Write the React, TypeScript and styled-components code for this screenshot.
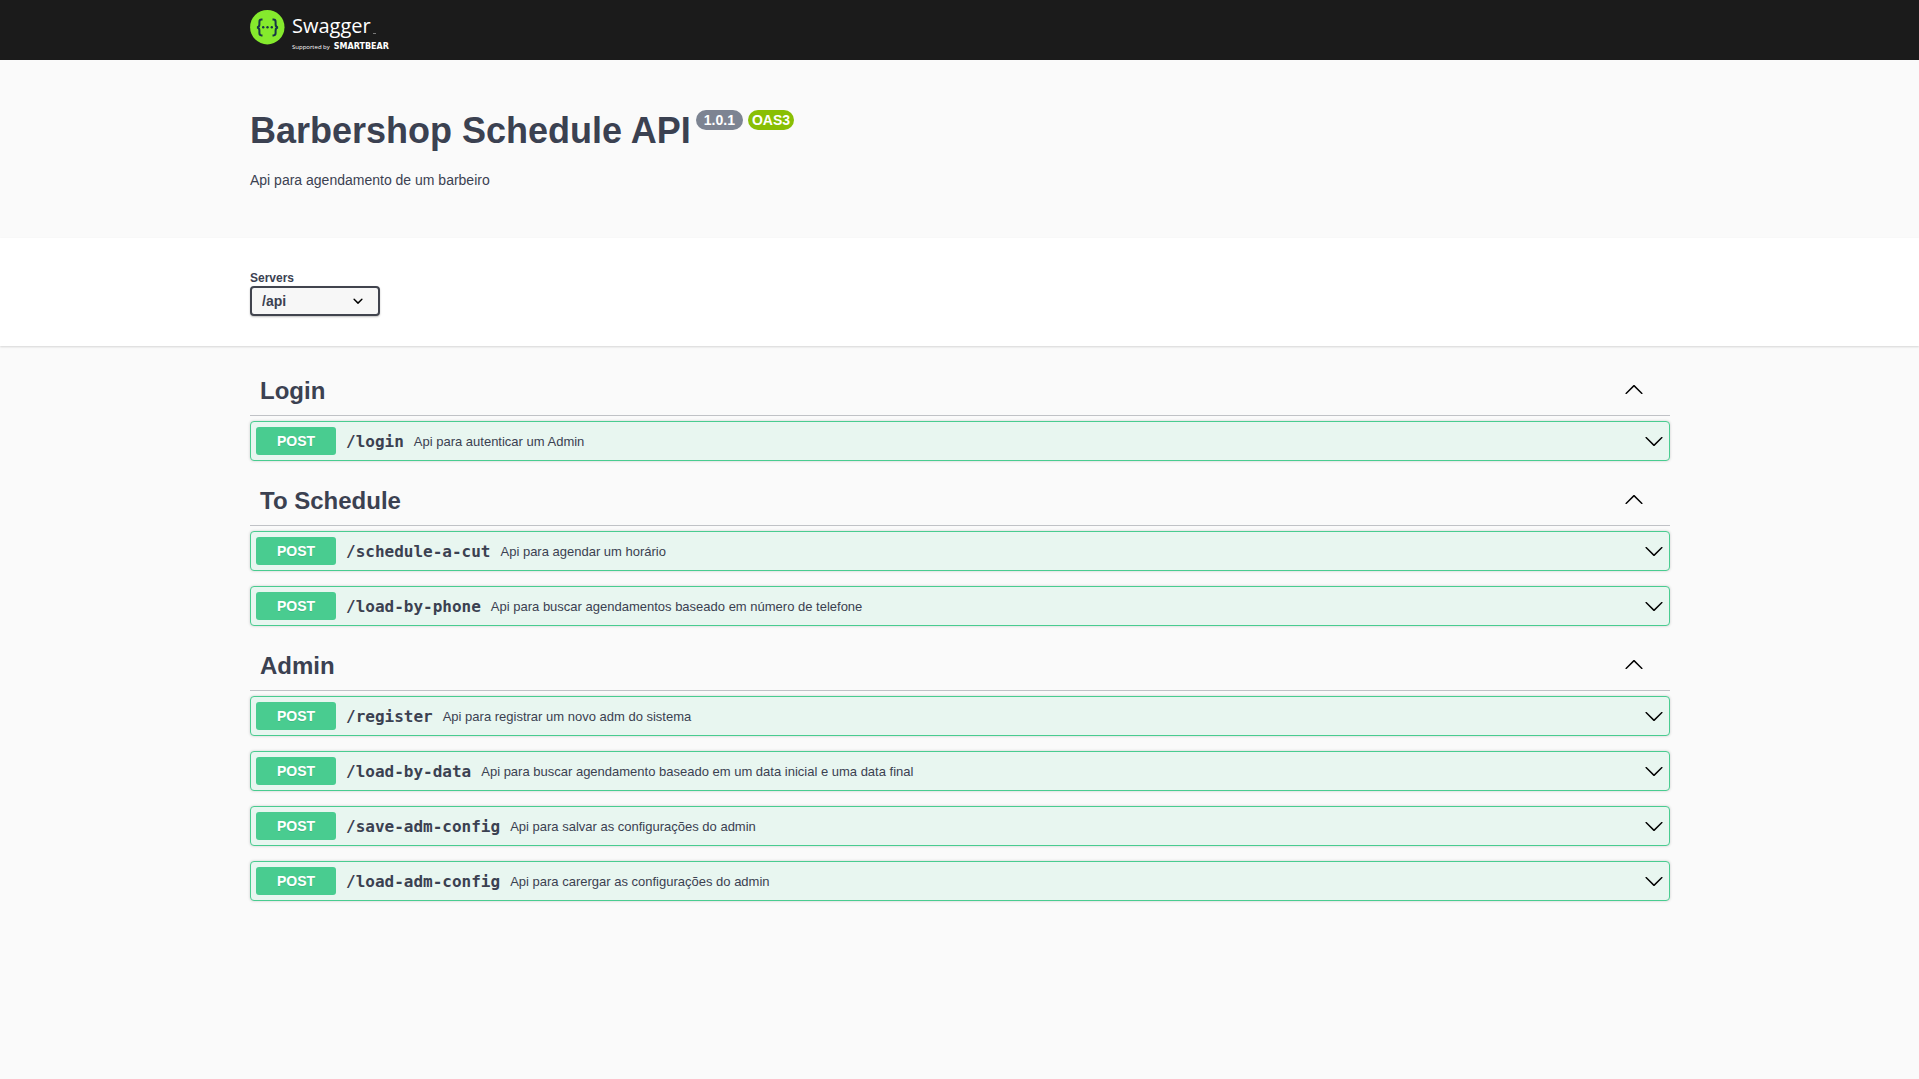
import React, { useState } from "react";
import styled, { createGlobalStyle } from "styled-components";

const GlobalStyle = createGlobalStyle`
  *, *::before, *::after { box-sizing: border-box; }
  body {
    margin: 0;
    background: #fafafa;
    color: #3b4151;
    font-family: "Liberation Sans", Arial, sans-serif;
  }
`;

const Wrapper = styled.div`
  width: 100%;
  max-width: 1459px;
  margin: 0 auto;
  padding: 0 19px 0 20px;
`;

const Topbar = styled.header`
  background: #1b1b1b;
  padding: 10px 0;
`;

const LogoLink = styled.a`
  display: flex;
  gap: 7px;
  height: 40px;
  width: max-content;
  color: #fff;
  text-decoration: none;
`;

const LogoMark = styled.svg`
  width: 35px;
  height: 35px;
`;

const LogoWords = styled.span`
  display: flex;
  flex-direction: column;
  font-family: "Open Sans", sans-serif;
`;

const LogoName = styled.span`
  display: flex;
  align-items: flex-end;
  gap: 2px;
  font-size: 20px;
  line-height: 32px;
`;

const Trademark = styled.span`
  width: 3px;
  height: 1px;
  margin-bottom: 8px;
  background: #777;
`;

const LogoSupport = styled.span`
  display: flex;
  align-items: baseline;
  gap: 4px;
  font-size: 6px;
  line-height: 10px;
`;

const LogoCompany = styled.b`
  font-family: "DejaVu Sans", sans-serif;
  font-size: 8px;
`;

const Info = styled.section`
  padding: 50px 0;
`;

const Title = styled.h1`
  display: flex;
  align-items: flex-start;
  gap: 5px;
  margin: 0;
  font-size: 36px;
  line-height: 41px;
`;

const Badge = styled.span<{ $color: string; $pad: number }>`
  padding: 2px ${(p) => p.$pad}px;
  border-radius: 57px;
  background: ${(p) => p.$color};
  color: #fff;
  font-size: 14px;
  line-height: 16px;
`;

const Description = styled.p`
  margin: 21px 0 0;
  font-size: 14px;
  line-height: 16px;
`;

const Schemes = styled.section`
  margin-bottom: 20px;
  padding: 30px 0;
  background: #fff;
  box-shadow: 0 1px 2px rgba(0, 0, 0, 0.15);
`;

const ServerLabel = styled.label`
  display: flex;
  flex-direction: column;
  align-items: flex-start;
  padding-top: 2px;
  font-size: 12px;
  font-weight: 700;
  line-height: 16px;
`;

const SelectBox = styled.span`
  display: grid;
  width: 130px;
  align-items: center;

  & > * {
    grid-area: 1 / 1;
  }
`;

const Select = styled.select`
  appearance: none;
  width: 100%;
  height: 30px;
  padding: 0 40px 0 10px;
  border: 2px solid #41444e;
  border-radius: 4px;
  background: #f7f7f7;
  box-shadow: 0 1px 2px rgba(0, 0, 0, 0.25);
  color: #3b4151;
  font-family: inherit;
  font-size: 14px;
  font-weight: 700;
`;

const SelectArrow = styled.svg`
  width: 20px;
  height: 20px;
  margin-right: 12px;
  justify-self: end;
  pointer-events: none;
`;

const TagSection = styled.section`
  display: flex;
  flex-direction: column;
`;

const TagHeader = styled.h2`
  margin: 0 0 5px;
  border-bottom: 1px solid rgba(59, 65, 81, 0.3);
  font-size: 24px;
  line-height: 29px;
`;

const TagButton = styled.button`
  display: flex;
  align-items: center;
  justify-content: space-between;
  width: 100%;
  padding: 10px 26px 10px 10px;
  border: 0;
  background: none;
  color: inherit;
  font: inherit;
  text-align: left;
  cursor: pointer;

  & > svg {
    margin-bottom: 1px;
  }
`;

const Operation = styled.button`
  display: flex;
  align-items: center;
  gap: 10px;
  height: 40px;
  margin-bottom: 15px;
  padding: 5px;
  border: 1px solid #49cc90;
  border-radius: 4px;
  background: #e8f6f0;
  box-shadow: 0 0 3px rgba(0, 0, 0, 0.19);
  color: #3b4151;
  font-family: inherit;
  text-align: left;
  cursor: pointer;
`;

const Method = styled.span`
  width: 80px;
  padding: 6px 0;
  border-radius: 3px;
  background: #49cc90;
  color: #fff;
  font-size: 14px;
  font-weight: 700;
  line-height: 16px;
  text-align: center;
  text-shadow: 0 1px 0 rgba(0, 0, 0, 0.1);
`;

const Path = styled.span`
  font-family: "DejaVu Sans Mono", monospace;
  font-size: 16px;
  font-weight: 700;
  line-height: 19px;
`;

const Summary = styled.span`
  flex: 1;
  font-size: 13px;
  line-height: 15px;
`;

const ChevronSvg = styled.svg<{ $up: boolean }>`
  width: 20px;
  height: 20px;
  transform: ${(p) => (p.$up ? "rotate(180deg)" : "none")};
`;

const Chevron = ({ up = false }: { up?: boolean }) => (
  <ChevronSvg $up={up} viewBox="0 0 20 20" aria-hidden="true">
    <path
      d="M17.418 6.109c.272-.268.709-.268.979 0s.271.701 0 .969l-7.908 7.83c-.27.268-.707.268-.979 0l-7.908-7.83c-.27-.268-.27-.701 0-.969.271-.268.709-.268.979 0L10 13.25z"
      fill="#000"
    />
  </ChevronSvg>
);

const sections = [
  { name: "Login", operations: [{ path: "/login", summary: "Api para autenticar um Admin" }] },
  {
    name: "To Schedule",
    operations: [
      { path: "/schedule-a-cut", summary: "Api para agendar um horário" },
      { path: "/load-by-phone", summary: "Api para buscar agendamentos baseado em número de telefone" },
    ],
  },
  {
    name: "Admin",
    operations: [
      { path: "/register", summary: "Api para registrar um novo adm do sistema" },
      { path: "/load-by-data", summary: "Api para buscar agendamento baseado em um data inicial e uma data final" },
      { path: "/save-adm-config", summary: "Api para salvar as configurações do admin" },
      { path: "/load-adm-config", summary: "Api para carergar as configurações do admin" },
    ],
  },
];

const Tag = ({ name, operations }: (typeof sections)[number]) => {
  const [open, setOpen] = useState(true);
  return (
    <TagSection>
      <TagHeader>
        <TagButton type="button" aria-expanded={open} onClick={() => setOpen(!open)}>
          {name}
          <Chevron up={open} />
        </TagButton>
      </TagHeader>
      {open &&
        operations.map((op) => (
          <Operation type="button" key={op.path}>
            <Method>POST</Method>
            <Path>{op.path}</Path>
            <Summary>{op.summary}</Summary>
            <Chevron />
          </Operation>
        ))}
    </TagSection>
  );
};

const Logo = () => (
  <LogoLink href="#">
    <LogoMark viewBox="0 0 35 35" aria-hidden="true">
      <circle cx="17.3" cy="17.2" r="17.2" fill="#85ea2d" />
      <g fill="none" stroke="#173647" strokeWidth="2">
        <path d="M12.5 9.6h-1c-1.6 0-2.1.8-2.1 2.3v2.7c0 1.7-.7 2.7-2.4 2.9 1.7.2 2.4 1.2 2.4 2.9v2.7c0 1.5.5 2.3 2.1 2.3h1" />
        <path d="M22.5 9.6h1c1.6 0 2.1.8 2.1 2.3v2.7c0 1.7.7 2.7 2.4 2.9-1.7.2-2.4 1.2-2.4 2.9v2.7c0 1.5-.5 2.3-2.1 2.3h-1" />
      </g>
      <g fill="#173647">
        <circle cx="13.2" cy="17.2" r="1.2" />
        <circle cx="17.5" cy="17.2" r="1.2" />
        <circle cx="21.8" cy="17.2" r="1.2" />
      </g>
    </LogoMark>
    <LogoWords>
      <LogoName>
        Swagger
        <Trademark />
      </LogoName>
      <LogoSupport>
        Supported by <LogoCompany>SMARTBEAR</LogoCompany>
      </LogoSupport>
    </LogoWords>
  </LogoLink>
);

export default function App() {
  return (
    <>
      <GlobalStyle />
      <Topbar>
        <Wrapper>
          <Logo />
        </Wrapper>
      </Topbar>
      <main>
        <Wrapper>
          <Info>
            <Title>
              Barbershop Schedule API
              <Badge $color="#7d8492" $pad={8}>1.0.1</Badge>
              <Badge $color="#89bf04" $pad={4}>OAS3</Badge>
            </Title>
            <Description>Api para agendamento de um barbeiro</Description>
          </Info>
        </Wrapper>
        <Schemes>
          <Wrapper>
            <ServerLabel>
              Servers
              <SelectBox>
                <Select defaultValue="/api">
                  <option value="/api">/api</option>
                </Select>
                <SelectArrow viewBox="0 0 20 20" aria-hidden="true">
                  <path
                    d="M13.418 7.859a.695.695 0 0 1 .978 0 .68.68 0 0 1 0 .969l-3.908 3.83a.697.697 0 0 1-.979 0l-3.908-3.83a.68.68 0 0 1 0-.969.695.695 0 0 1 .978 0L10 11z"
                    fill="#000"
                  />
                </SelectArrow>
              </SelectBox>
            </ServerLabel>
          </Wrapper>
        </Schemes>
        <Wrapper>
          {sections.map((section) => (
            <Tag key={section.name} {...section} />
          ))}
        </Wrapper>
      </main>
    </>
  );
}
